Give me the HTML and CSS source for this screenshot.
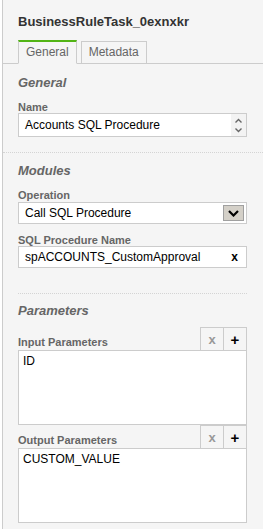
FILE: index.html
```html
<!DOCTYPE html>
<html>

<head>
  <meta charset="UTF-8">
  <title>BusinessRuleTask_0exnxkr</title>
  <link rel="stylesheet" href="styles.css">
</head>

<body>
  <div class="panel">
    <div class="panel-header">
      <h1 class="panel-title">BusinessRuleTask_0exnxkr</h1>
    </div>

    <div class="tabs">
      <div class="tab tab-active">General</div>
      <div class="tab">Metadata</div>
    </div>

    <div class="group group-general">
      <h2 class="group-title">General</h2>
      <label class="field-label">Name</label>
      <div class="field field-name">
        <span class="field-value">Accounts SQL Procedure</span>
        <span class="spin">
          <svg width="9" height="17" viewBox="0 0 9 17">
            <polyline points="1.5,5.5 4.5,2.5 7.5,5.5" fill="none" stroke="#666" stroke-width="1.4"/>
            <polyline points="1.5,11.5 4.5,14.5 7.5,11.5" fill="none" stroke="#666" stroke-width="1.4"/>
          </svg>
        </span>
      </div>
    </div>

    <div class="group group-modules">
      <h2 class="group-title">Modules</h2>
      <label class="field-label">Operation</label>
      <div class="field field-select">
        <span class="field-value">Call SQL Procedure</span>
        <span class="select-btn">
          <svg width="11" height="7" viewBox="0 0 11 7">
            <polyline points="1,1 5.5,5.5 10,1" fill="none" stroke="#000" stroke-width="2.2"/>
          </svg>
        </span>
      </div>

      <label class="field-label">SQL Procedure Name</label>
      <div class="field field-text">
        <span class="field-value">spACCOUNTS_CustomApproval</span>
        <span class="clear">x</span>
      </div>

      <div class="divider"></div>

      <h2 class="group-title title-params">Parameters</h2>

      <div class="param-head">
        <label class="field-label param-label">Input Parameters</label>
        <div class="param-buttons">
          <span class="param-btn btn-remove">x</span>
          <span class="param-btn btn-add">+</span>
        </div>
      </div>
      <div class="param-list">ID</div>

      <div class="param-head param-head-next">
        <label class="field-label param-label">Output Parameters</label>
        <div class="param-buttons">
          <span class="param-btn btn-remove">x</span>
          <span class="param-btn btn-add">+</span>
        </div>
      </div>
      <div class="param-list">CUSTOM_VALUE</div>
    </div>
  </div>
</body>
</html>
```

FILE: styles.css
```css
body {
  margin: 0;
  background: #fff;
  font-family: "Liberation Sans", Arial, sans-serif;
}

.panel {
  margin-left: 2px;
  height: 529px;
  box-sizing: border-box;
  border-left: 1px solid #ccc;
  background: #f5f5f5;
  display: flex;
  flex-direction: column;
}

.panel-header {
  padding: 14px 16px 0 15px;
}

.panel-title {
  margin: 0;
  font-size: 13px;
  line-height: 16px;
  font-weight: bold;
  color: #333;
}

.tabs {
  display: flex;
  align-items: flex-end;
  gap: 4px;
  margin-top: 10px;
  padding-left: 15px;
  border-bottom: 1px solid #ccc;
}

.tab {
  padding: 3px 7px 4px;
  font-size: 12px;
  line-height: 14px;
  color: #666;
  border: 1px solid #ccc;
  margin-bottom: -1px;
}

.tab-active {
  border-top: 2px solid #52b415;
  border-bottom-color: #f5f5f5;
}

.group {
  padding: 0 16px 0 15px;
}

.group-general {
  padding-top: 11px;
  padding-bottom: 15px;
  border-bottom: 1px dotted #d4d4d4;
}

.group-modules {
  padding-top: 10px;
}

.group-title {
  margin: 0;
  font-size: 13px;
  line-height: 16px;
  font-weight: bold;
  font-style: italic;
  color: #666;
}

.field-label {
  display: block;
  margin: 10px 0 0;
  font-size: 11px;
  line-height: 12px;
  font-weight: bold;
  color: #666;
}

.field {
  display: flex;
  align-items: center;
  box-sizing: border-box;
  height: 22px;
  padding-left: 6px;
  border: 1px solid #ccc;
  background: #fff;
  font-size: 12px;
  line-height: 14px;
  color: #000;
}

.field-value {
  flex: 1;
}

.field-name {
  height: 24px;
}

.spin {
  display: flex;
  align-items: center;
  justify-content: center;
  width: 15px;
  height: 22px;
  background: #f3f3f3;
}

.field-select {
  margin-top: 1px;
}

.select-btn {
  display: flex;
  align-items: center;
  justify-content: center;
  box-sizing: border-box;
  width: 21px;
  height: 16px;
  margin-right: 2px;
  border: 1px solid #a0a0a0;
  background: #d4d0c8;
}

.clear {
  margin-right: 8px;
  font-weight: bold;
  font-size: 12px;
}

.divider {
  margin-top: 25px;
  border-top: 1px dotted #d4d4d4;
}

.title-params {
  margin-top: 9px;
}

.param-head {
  display: flex;
  align-items: flex-end;
  justify-content: space-between;
  margin-top: 8px;
}

.param-head-next {
  margin-top: 0;
}

.param-label {
  margin: 0 0 2px;
}

.param-buttons {
  display: flex;
}

.param-btn {
  display: flex;
  align-items: center;
  justify-content: center;
  box-sizing: border-box;
  width: 23px;
  height: 23px;
  border: 1px solid #ccc;
  border-bottom: none;
  font-weight: bold;
  font-size: 13px;
}

.btn-remove {
  width: 24px;
  color: #999;
}

.btn-add {
  border-left: none;
  font-size: 15px;
  color: #000;
}

.param-list {
  box-sizing: border-box;
  height: 75px;
  padding: 3px 4px;
  border: 1px solid #ccc;
  background: #fff;
  font-size: 12px;
  line-height: 14px;
  color: #000;
}
```
